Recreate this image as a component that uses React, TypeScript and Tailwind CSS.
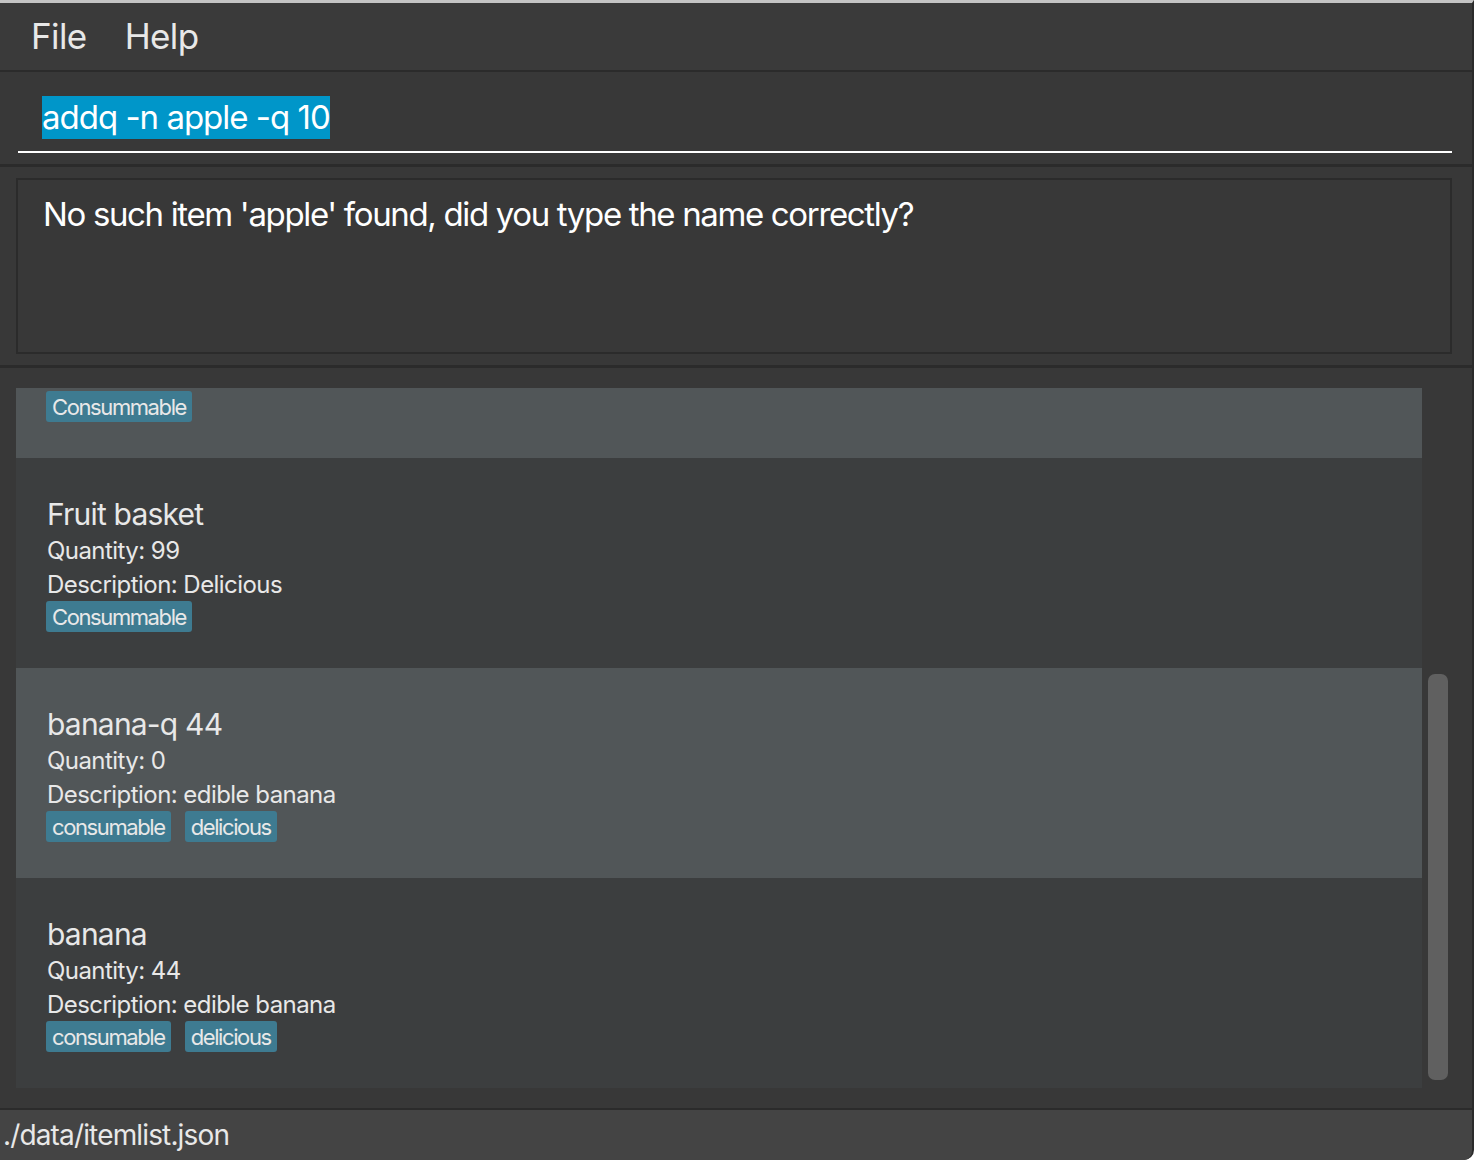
const font = { fontFamily: "Inter, 'Noto Sans', sans-serif" };

type Item = {
  name: string;
  quantity: number;
  description: string;
  tags: string[];
};

const items: Item[] = [
  { name: "Fruit basket", quantity: 99, description: "Delicious", tags: ["Consummable"] },
  { name: "banana-q 44", quantity: 0, description: "edible banana", tags: ["consumable", "delicious"] },
  { name: "banana", quantity: 44, description: "edible banana", tags: ["consumable", "delicious"] },
];

const Tag = ({ label }: { label: string }) => (
  <span className="inline-flex items-center h-[31px] px-[6px] rounded-[3px] bg-[#3e7b91] text-[22px] text-[#e8e8e8] leading-none tracking-[-1.4px]">
    {label}
  </span>
);

const ItemCard = ({ item, odd }: { item: Item; odd: boolean }) => (
  <div className={`h-[210px] pl-[30px] pt-[38px] ${odd ? "bg-[#515658]" : "bg-[#3c3e3f]"}`}>
    <div className="pl-[1px] text-[30px] leading-[36px] text-[#e8e8e8] tracking-[-0.8px]">{item.name}</div>
    <div className="pl-[1px] mt-[2px] text-[24px] leading-[34px] text-[#e8e8e8] tracking-[-0.55px]">Quantity: {item.quantity}</div>
    <div className="pl-[1px] text-[24px] leading-[34px] text-[#e8e8e8] tracking-[-0.55px]">Description: {item.description}</div>
    <div className="flex gap-[14px] -mt-[1px]">
      {item.tags.map((t) => (
        <Tag key={t} label={t} />
      ))}
    </div>
  </div>
);

const App = () => {
  return (
    <div
      className="w-[1474px] h-[1160px] flex flex-col bg-[#383838] border-t-[3px] border-t-[#c4c4c4] border-r-2 border-r-[#2a2a2a] overflow-hidden rounded-br-[10px]"
      style={font}
    >
      {/* menu bar */}
      <div className="h-[67px] bg-[#3a3a3a] flex items-center gap-[38px] pl-[31px] text-[35px] text-[#e8e8e8] tracking-[-0.6px] shrink-0">
        <span>File</span>
        <span>Help</span>
      </div>
      <div className="h-[2px] bg-[#2b2b2b] shrink-0" />

      {/* command box */}
      <div className="h-[92px] bg-[#383838] px-[18px] pr-[20px] pt-[24px] shrink-0">
        <div className="h-[57px] border-b-2 border-white pl-[24px]">
          <span className="inline-block bg-[#0096c9] text-white text-[33px] leading-[43px] tracking-[-1px]">
            addq -n apple -q 10
          </span>
        </div>
      </div>
      <div className="h-[3px] bg-[#2b2b2b] shrink-0" />

      {/* result display */}
      <div className="h-[198px] bg-[#383838] px-[16px] pr-[20px] py-[11px] shrink-0">
        <div className="h-full border-2 border-[#2b2b2b] pl-[25px] pt-[12px] text-white text-[33px] leading-[44px] tracking-[-1.35px]">
          No such item 'apple' found, did you type the name correctly?
        </div>
      </div>
      <div className="h-[3px] bg-[#2b2b2b] shrink-0" />

      {/* item list */}
      <div className="flex-1 bg-[#383838] flex pt-[20px] pb-[20px] pl-[16px] min-h-0">
        <div className="w-[1406px] flex flex-col overflow-hidden">
          <div className="h-[70px] shrink-0 bg-[#515658] pl-[30px] pt-[3px]">
            <Tag label="Consummable" />
          </div>
          {items.map((item, i) => (
            <div key={item.name} className="shrink-0">
              <ItemCard item={item} odd={i % 2 === 1} />
            </div>
          ))}
        </div>
        <div className="flex-1 flex pl-[6px] pt-[286px] pb-[8px]">
          <div className="w-[20px] h-full rounded-[7px] bg-[#606060]" />
        </div>
      </div>

      {/* status bar */}
      <div className="h-[2px] bg-[#2b2b2b] shrink-0" />
      <div className="h-[50px] bg-[#444444] flex items-center pl-[3px] text-[28px] text-[#e8e8e8] tracking-[-0.85px] shrink-0">
        ./data/itemlist.json
      </div>
    </div>
  );
};

export default App;
